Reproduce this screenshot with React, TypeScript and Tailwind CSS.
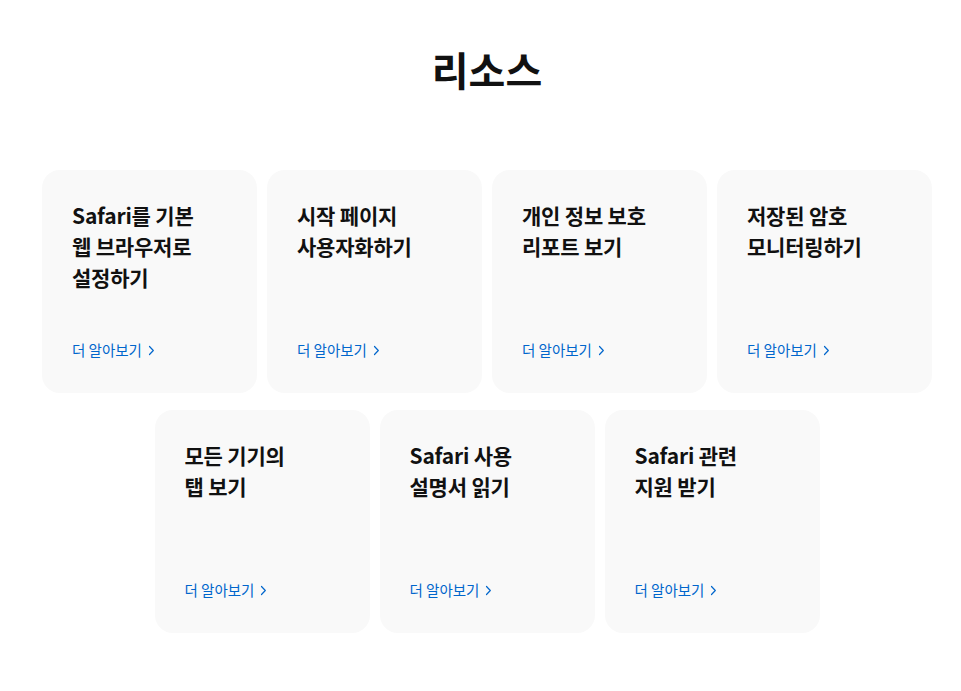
const cards = [
  ['Safari를 기본', '웹 브라우저로', '설정하기'],
  ['시작 페이지', '사용자화하기'],
  ['개인 정보 보호', '리포트 보기'],
  ['저장된 암호', '모니터링하기'],
  ['모든 기기의', '탭 보기'],
  ['Safari 사용', '설명서 읽기'],
  ['Safari 관련', '지원 받기'],
];

function Card({ lines }: { lines: string[] }) {
  return (
    <div className="w-[215px] h-[223px] rounded-[18px] bg-[#f9f9f9] px-[30px] pt-[30px] pb-[33px] flex flex-col justify-between">
      <p className="text-[21px] leading-[31px] font-semibold text-[#111111] tracking-[-0.2px]">
        {lines.map((l, i) => (
          <span key={i} className="block">{l}</span>
        ))}
      </p>
      <a href="#" className="text-[14.5px] leading-[20px] text-[#0066cc] flex items-center gap-[6px]">
        더 알아보기
        <svg width="7" height="11" viewBox="0 0 7 11" fill="none">
          <path d="M1.5 1.5L5.3 5.5l-3.8 4" stroke="currentColor" strokeWidth="1.2" strokeLinecap="round" strokeLinejoin="round" />
        </svg>
      </a>
    </div>
  );
}

export default function App() {
  return (
    <div
      className="min-h-screen bg-white pl-[13px]"
      style={{ fontFamily: '"Noto Sans CJK KR", "Noto Sans", sans-serif' }}
    >
      <h2 className="pt-[40px] text-center text-[40px] leading-[58px] font-bold text-[#111111]">리소스</h2>
      <div className="mt-[72px] flex flex-col items-center gap-[17px]">
        <div className="flex gap-[10px]">
          {cards.slice(0, 4).map((c, i) => (
            <Card key={i} lines={c} />
          ))}
        </div>
        <div className="flex gap-[10px]">
          {cards.slice(4).map((c, i) => (
            <Card key={i} lines={c} />
          ))}
        </div>
      </div>
    </div>
  );
}
